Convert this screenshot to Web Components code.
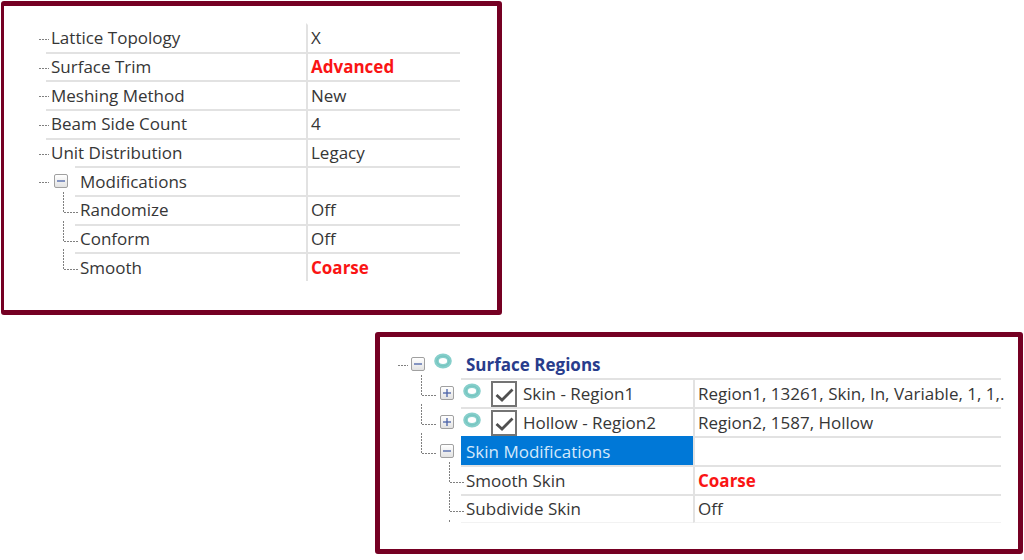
<!DOCTYPE html>
<html lang="en">
<head>
<meta charset="utf-8">
<title>Lattice properties</title>
<style>
  body {
    margin: 0;
    padding: 1px;
    background: #fff;
    color: #363636;
    font: 17px/24px "Open Sans", "Noto Sans", sans-serif;
  }
  main {
    display: grid;
    grid-template-columns: 374fr 127fr 521fr;
    row-gap: 17px;
  }
  .lattice { grid-column: 1 / 3; --pad: 17px 37px 29px 35px; --left: 3px; }
  .regions { grid-column: 2 / 4; --pad: 12px 17px 26px 18px; }
</style>
</head>
<body>
<main>
  <framed-panel class="lattice"><property-tree name="lattice"></property-tree></framed-panel>
  <framed-panel class="regions"><property-tree name="regions"></property-tree></framed-panel>
</main>

<template id="panel-template">
  <style>
    :host {
      display: block;
      box-sizing: border-box;
      min-width: 0;
      padding: var(--pad);
      border: 5px solid #750023;
      border-left-width: var(--left, 5px);
      border-radius: 3px;
    }
  </style>
  <slot></slot>
</template>

<template id="toggle-template">
  <style>
    :host { display: block; width: 14px; height: 14px; }
    button {
      display: block; width: 14px; height: 14px; padding: 0;
      border: 1px solid #a0a0a0; border-radius: 2px;
      background: linear-gradient(#fff, #e2e2e2);
    }
    svg { display: block; width: 12px; height: 12px; }
    path { stroke: #4a62a8; stroke-width: 1.3; fill: none; }
    :host([open]) .upright { display: none; }
  </style>
  <button type="button"><svg viewBox="0 0 12 12"><path d="M2 6H10"/><path class="upright" d="M6 2V10"/></svg></button>
</template>

<template id="ring-template">
  <style>
    :host { display: block; width: 18px; height: 16px; }
    svg { display: block; }
  </style>
  <svg width="18" height="16" viewBox="0 0 18 16">
    <ellipse cx="9" cy="8" rx="6.5" ry="5.3" fill="none" stroke="#86cfcb" stroke-width="4.6"/>
    <ellipse cx="9" cy="8" rx="6.2" ry="5" fill="none" stroke="#70c2bd" stroke-width="1"/>
  </svg>
</template>

<template id="tree-template">
  <style>
    :host { display: block; }
    table { width: 100%; table-layout: fixed; border-collapse: separate; border-spacing: 0; }
    .lattice { height: 258px; }
    .regions { height: 174px; }
    .lattice .names { width: 267px; }
    .regions .names { width: 295px; }
    th, td { padding: 0; height: 28px; font-weight: 400; text-align: left; white-space: nowrap; }
    .name { display: flex; height: 100%; }
    .gutter { position: relative; flex: none; display: flex; align-items: center; justify-content: flex-end; box-sizing: border-box; }
    .gutter svg { position: absolute; left: 0; top: 0; overflow: visible; }
    .gutter path { fill: none; stroke: #808080; stroke-width: 1; stroke-dasharray: 2 1; }
    .label { flex: 1; display: flex; align-items: center; box-sizing: border-box; padding-left: 5px; border-top: 2px solid #e2e2e2; }
    td { box-sizing: border-box; padding-left: 3px; border-top: 2px solid #e2e2e2; border-left: 2px solid #e2e2e2; }
    tr:first-child .label, tr:first-child td { border-top-color: transparent; }
    .regions tr:first-child td { border-left-color: transparent; }
    .regions tr:last-child .label, .regions tr:last-child td { border-bottom: 1px solid #f2f2f2; }
    .changed { color: #fa1414; font-weight: 700; }
    .heading { color: #283c8c; font-weight: 700; }
    .selected .label { background: #0078d7; color: #d4e9fb; border-top-color: #0078d7; }
    .d0 { width: 7px; }
    .d1 { width: 36px; padding-right: 7px; }
    .d2 { width: 63px; padding-right: 7px; }
    .root { width: 63px; padding-right: 9px; gap: 9px; }
    .root tree-ring { margin-bottom: 5px; }
    .item { padding-left: 2px; }
    .item tree-ring { margin-bottom: 5px; }
    .check { position: relative; display: block; width: 26px; height: 26px; margin: 0 6px 0 10px; }
    .check input { appearance: none; display: block; width: 26px; height: 26px; margin: 0; border: 2px solid #747474; background: #fff; }
    .check svg { position: absolute; left: 0; top: 0; pointer-events: none; }
    .check path { fill: none; stroke: #505050; stroke-width: 2.8; }
  </style>
  <table><colgroup><col class="names"><col></colgroup><tbody></tbody></table>
</template>

<script>
  const stamp = (host, id) => {
    const root = host.attachShadow({ mode: "open" });
    root.append(document.getElementById(id).content.cloneNode(true));
    return root;
  };

  class FramedPanel extends HTMLElement {
    constructor() { super(); stamp(this, "panel-template"); }
  }
  class TreeToggle extends HTMLElement {
    constructor() {
      super();
      const button = stamp(this, "toggle-template").querySelector("button");
      button.setAttribute("aria-label", "Expand or collapse");
      button.addEventListener("click", () => this.toggleAttribute("open"));
    }
  }
  class TreeRing extends HTMLElement {
    constructor() { super(); stamp(this, "ring-template"); }
  }

  // Dotted connector lines, measured from the top left of a row's gutter.
  const stub = "M0 16.5H10";
  const branch = x => `M${x}.5 -3V17.5H${x + 15}`;

  const trees = {
    lattice: [
      { name: "Lattice Topology", value: "X", gutter: "d0", line: stub },
      { name: "Surface Trim", value: "Advanced", changed: true, gutter: "d0", line: stub },
      { name: "Meshing Method", value: "New", gutter: "d0", line: stub },
      { name: "Beam Side Count", value: "4", gutter: "d0", line: stub },
      { name: "Unit Distribution", value: "Legacy", gutter: "d0", line: stub },
      { name: "Modifications", value: "", gutter: "d1", line: stub, toggle: "open" },
      { name: "Randomize", value: "Off", gutter: "d1", line: branch(24) },
      { name: "Conform", value: "Off", gutter: "d1", line: branch(24) },
      { name: "Smooth", value: "Coarse", changed: true, gutter: "d1", line: branch(24) }
    ],
    regions: [
      { name: "Surface Regions", value: "", gutter: "root", line: stub, toggle: "open", ring: true, heading: true },
      { name: "Skin - Region1", value: "Region1, 13261, Skin, In, Variable, 1, 1,.", gutter: "d2", line: branch(23), toggle: "closed", item: true },
      { name: "Hollow - Region2", value: "Region2, 1587, Hollow", gutter: "d2", line: branch(23), toggle: "closed", item: true },
      { name: "Skin Modifications", value: "", gutter: "d2", line: branch(23), toggle: "open", selected: true },
      { name: "Smooth Skin", value: "Coarse", changed: true, gutter: "d2", line: branch(51) },
      { name: "Subdivide Skin", value: "Off", gutter: "d2", line: branch(51) + "M51.5 26V29" }
    ]
  };

  class PropertyTree extends HTMLElement {
    constructor() { super(); stamp(this, "tree-template"); }
    connectedCallback() {
      const kind = this.getAttribute("name");
      this.shadowRoot.querySelector("table").className = kind;
      this.shadowRoot.querySelector("tbody").innerHTML = trees[kind].map((row, i) => {
        const toggle = row.toggle ? `<tree-toggle ${row.toggle === "open" ? "open" : ""}></tree-toggle>` : "";
        const ring = row.ring ? "<tree-ring></tree-ring>" : "";
        const label = row.item
          ? `<tree-ring></tree-ring><span class="check"><input type="checkbox" id="item${i}" checked><svg width="26" height="26" viewBox="0 0 26 26"><path d="M5.5 14L11 19L21.5 8.5"/></svg></span><label for="item${i}">${row.name}</label>`
          : `<span class="${row.heading ? "heading" : ""}">${row.name}</span>`;
        return `<tr class="${row.selected ? "selected" : ""}"><th scope="row"><div class="name"><div class="gutter ${row.gutter}"><svg width="1" height="1"><path d="${row.line}"/></svg>${toggle}${ring}</div><div class="label ${row.item ? "item" : ""}">${label}</div></div></th><td class="${row.changed ? "changed" : ""}">${row.value}</td></tr>`;
      }).join("");
    }
  }

  customElements.define("framed-panel", FramedPanel);
  customElements.define("tree-toggle", TreeToggle);
  customElements.define("tree-ring", TreeRing);
  customElements.define("property-tree", PropertyTree);
</script>
</body>
</html>
